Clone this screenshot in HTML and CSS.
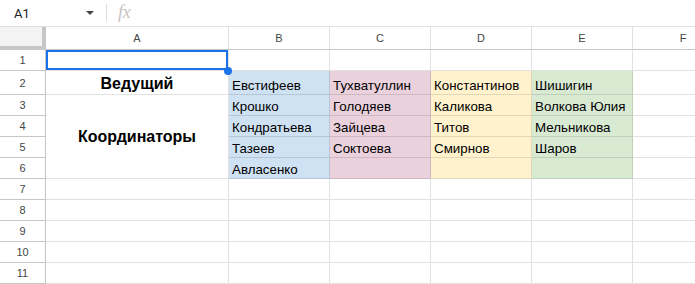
FILE: index.html
```html
<!DOCTYPE html>
<html lang="ru">
<head>
<meta charset="utf-8">
<title>Sheet</title>
<link rel="stylesheet" href="styles.css">
</head>
<body>
<div class="app">
  <div class="formula-bar">
    <div class="namebox"><span class="ref">A1</span><span class="caret"></span></div>
    <div class="sep"></div>
    <span class="fx">fx</span>
  </div>
  <div class="grid">
    <div class="corner"></div>
    <div class="ch">A</div><div class="ch">B</div><div class="ch">C</div><div class="ch">D</div><div class="ch">E</div><div class="ch">F</div>

    <div class="rh">1</div><div class="c sel"></div><div class="c"></div><div class="c"></div><div class="c"></div><div class="c"></div><div class="c"></div>

    <div class="rh">2</div><div class="c title">Ведущий</div><div class="c blue">Евстифеев</div><div class="c pink">Тухватуллин</div><div class="c yellow">Константинов</div><div class="c green">Шишигин</div><div class="c"></div>

    <div class="rh">3</div><div class="c title merged">Координаторы</div><div class="c blue">Крошко</div><div class="c pink">Голодяев</div><div class="c yellow">Каликова</div><div class="c green">Волкова Юлия</div><div class="c"></div>

    <div class="rh">4</div><div class="c blue">Кондратьева</div><div class="c pink">Зайцева</div><div class="c yellow">Титов</div><div class="c green">Мельникова</div><div class="c"></div>

    <div class="rh">5</div><div class="c blue">Тазеев</div><div class="c pink">Соктоева</div><div class="c yellow">Смирнов</div><div class="c green">Шаров</div><div class="c"></div>

    <div class="rh">6</div><div class="c blue">Авласенко</div><div class="c pink"></div><div class="c yellow"></div><div class="c green"></div><div class="c"></div>

    <div class="rh">7</div><div class="c"></div><div class="c"></div><div class="c"></div><div class="c"></div><div class="c"></div><div class="c"></div>
    <div class="rh">8</div><div class="c"></div><div class="c"></div><div class="c"></div><div class="c"></div><div class="c"></div><div class="c"></div>
    <div class="rh">9</div><div class="c"></div><div class="c"></div><div class="c"></div><div class="c"></div><div class="c"></div><div class="c"></div>
    <div class="rh">10</div><div class="c"></div><div class="c"></div><div class="c"></div><div class="c"></div><div class="c"></div><div class="c"></div>
    <div class="rh">11</div><div class="c"></div><div class="c"></div><div class="c"></div><div class="c"></div><div class="c"></div><div class="c"></div>
  </div>
</div>
</body>
</html>
```

FILE: styles.css
```css
* { box-sizing: border-box; }
html, body { margin: 0; padding: 0; background: #fff; overflow: hidden; }
body { width: 695px; height: 284px; font-family: "Liberation Sans", Arial, sans-serif; }

.app { width: 695px; height: 284px; overflow: hidden; }

.formula-bar {
  height: 27px;
  border-bottom: 1px solid #e1e1e1;
  display: flex;
  align-items: center;
}
.namebox {
  width: 106px;
  display: flex;
  align-items: center;
  padding-left: 14px;
}
.ref {
  font-family: Roboto, "Liberation Sans", sans-serif;
  font-size: 13px;
  color: #202124;
  flex: 1;
}
.caret {
  width: 0; height: 0;
  border-left: 4px solid transparent;
  border-right: 4px solid transparent;
  border-top: 4px solid #444746;
  margin-right: 12px;
  margin-bottom: 1px;
}
.sep { width: 1px; height: 17px; background: #dadce0; margin-bottom: 1px; }
.fx {
  font-family: "Liberation Serif", "DejaVu Serif", serif;
  font-style: italic;
  font-size: 18px;
  color: #c4c4c4;
  margin-left: 11px;
  letter-spacing: -0.3px;
  margin-bottom: 2px;
}

.grid {
  display: grid;
  grid-template-columns: 46px 183px 101px 101px 101px 101px 101px;
  grid-template-rows: 23px 21px 24px repeat(9, 21px);
  width: 734px;
}

.corner {
  background: #f3f3f3;
  border-right: 4px solid #c7c7c7;
  border-bottom: 4px solid #c7c7c7;
}
.ch {
  display: flex;
  align-items: center;
  justify-content: center;
  font-size: 11px;
  color: #444746;
  border-right: 1px solid #e1e1e1;
  border-bottom: 1px solid #c4c7c5;
  padding-bottom: 1px;
}
.rh {
  display: flex;
  align-items: center;
  justify-content: center;
  font-size: 11px;
  color: #444746;
  border-right: 1px solid #c4c7c5;
  border-bottom: 1px solid #c4c7c5;
}

.c {
  position: relative;
  display: flex;
  align-items: flex-end;
  padding: 0 3px 1px 3px;
  font-size: 13.33px;
  line-height: 15px;
  color: #000;
  white-space: nowrap;
  border-right: 1px solid #e1e1e1;
  border-bottom: 1px solid #e1e1e1;
}

.title {
  justify-content: center;
  font-weight: bold;
  font-size: 16px;
  line-height: 18px;
  padding-bottom: 1px;
}
.merged {
  grid-row: span 4;
  align-items: center;
  padding-bottom: 0;
}

.blue { background: #cfe2f3; border-color: #b7c6d4; }
.pink { background: #ead1dc; border-color: #cdb9c2; }
.yellow { background: #fff2cc; border-color: #e2d7b6; }
.green { background: #d9ead3; border-color: #bfcfba; }

.sel::before {
  content: "";
  position: absolute;
  top: 0; left: 0; right: 0; bottom: 0;
  border: 2px solid #1a73e8;
  z-index: 2;
}
.sel::after {
  content: "";
  position: absolute;
  width: 8px; height: 8px;
  right: -4px; bottom: -5px;
  border-radius: 50%;
  background: #1a73e8;
  z-index: 3;
}
```
